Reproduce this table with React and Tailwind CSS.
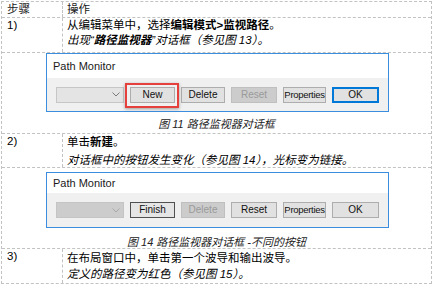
const font = { fontFamily: '"Liberation Sans", "Noto Sans CJK SC", sans-serif' }

const Chevron = ({ color }) => (
  <svg width="8" height="5" viewBox="0 0 8 5" fill="none">
    <path d="M0.5 0.5 L4 4 L7.5 0.5" stroke={color} strokeWidth="1" />
  </svg>
)

const Btn = ({ label, w, disabled, variant }) => {
  let cls = "border border-[#adadad] bg-[#e1e1e1] text-[#111]"
  if (disabled) cls = "border border-[#bfbfbf] bg-[#cccccc] text-[#9a9a9a]"
  if (variant === "default") cls = "border-2 border-[#0078d7] bg-[#e1e1e1] text-[#111]"
  if (variant === "focus") cls = "border border-[#505050] bg-[#e5e5e5] text-[#111]"
  const size = label === "Properties" ? "text-[9.5px] tracking-[-0.3px]" : "text-[10px]"
  return (
    <div
      className={`flex h-[16px] items-center justify-center overflow-hidden leading-none ${size} ${cls}`}
      style={{ width: w }}
    >
      {label}
    </div>
  )
}

const Dialog = ({ mode }) => {
  const first = mode === 1
  return (
    <div className={`ml-[44px] flex w-[343px] flex-col border border-[#3b8ede] bg-white ${first ? "h-[59px]" : "mt-[4px] h-[56px]"}`}>
      <div className={`flex items-center pl-[6px] text-[11px] text-[#1a1a1a] ${first ? "h-[24px]" : "h-[20px]"}`}>
        Path Monitor
      </div>
      <div className="flex flex-1 items-center gap-[6px] bg-[#f0f0f0] pl-[9px]">
        <div
          className={`flex h-[16px] w-[68px] items-center justify-end pr-[3px] border ${
            first ? "border-[#c6c6c6] bg-[#e4e4e4]" : "border-[#c4c4c4] bg-[#cccccc]"
          }`}
        >
          <Chevron color={first ? "#7a7a7a" : "#a8a8a8"} />
        </div>
        {first ? (
          <div className="relative">
            <Btn label="New" w={45} />
            <div className="absolute -top-[4px] -left-[5px] -right-[4px] -bottom-[5px] border-2 border-[#e5403c] shadow-[0_1px_3px_rgba(0,0,0,0.35)]" />
          </div>
        ) : (
          <Btn label="Finish" w={45} variant="focus" />
        )}
        <Btn label="Delete" w={44} disabled={!first} />
        <Btn label="Reset" w={46} disabled={first} />
        <Btn label="Properties" w={43} />
        <Btn label="OK" w={47} variant={first ? "default" : undefined} />
      </div>
    </div>
  )
}

const Row = ({ num, h, children, last }) => (
  <div className={`flex ${h} ${last ? "" : "border-b border-dashed border-[#c2c2c2]"}`}>
    <div className="w-[61px] shrink-0 border-r border-dashed border-[#c2c2c2] pl-[5px] text-[11.5px] leading-[15px]">
      {num}
    </div>
    <div className="flex-1 pl-[4px] text-[11.5px]">{children}</div>
  </div>
)

export default function App() {
  return (
    <div className="h-[285px] w-[434px] bg-white pt-[1px] pl-[1px] text-black" style={font}>
      <div className="w-[431px] border border-dashed border-[#c2c2c2]">
        <div className="flex h-[16px] border-b border-dashed border-[#c2c2c2] text-[11.5px] leading-[15px] text-[#222]">
          <div className="w-[61px] shrink-0 border-r border-dashed border-[#c2c2c2] pl-[5px]">步骤</div>
          <div className="flex-1 pl-[4px]">操作</div>
        </div>

        <Row num="1)" h="h-[35px]">
          <div className="leading-[15px]">
            从编辑菜单中，选择<b>编辑模式&gt;监视路径</b>。
          </div>
          <div className="italic leading-[15px]">
            出现“<b>路径监视器</b>”对话框（参见图 13）。
          </div>
        </Row>

        <div className="flex h-[81px] flex-col border-b border-dashed border-[#c2c2c2]">
          <Dialog mode={1} />
          <div className="mt-[4px] text-center text-[11px] italic leading-[16px] text-[#222]">图 11 路径监视器对话框</div>
        </div>

        <Row num="2)" h="h-[34px]">
          <div className="leading-[16px]">
            单击<b>新建</b>。
          </div>
          <div className="pt-[2px] italic leading-[16px]">对话框中的按钮发生变化（参见图 14），光标变为链接。</div>
        </Row>

        <div className="flex h-[81px] flex-col border-b border-dashed border-[#c2c2c2]">
          <Dialog mode={2} />
          <div className="mt-[8px] text-center text-[11px] italic leading-[12px] text-[#222]">图 14 路径监视器对话框 -不同的按钮</div>
        </div>

        <Row num="3)" h="h-[34px]" last>
          <div className="pt-[1px] leading-[16px]">在布局窗口中，单击第一个波导和输出波导。</div>
          <div className="italic leading-[16px]">定义的路径变为红色（参见图 15）。</div>
        </Row>
      </div>
    </div>
  )
}
